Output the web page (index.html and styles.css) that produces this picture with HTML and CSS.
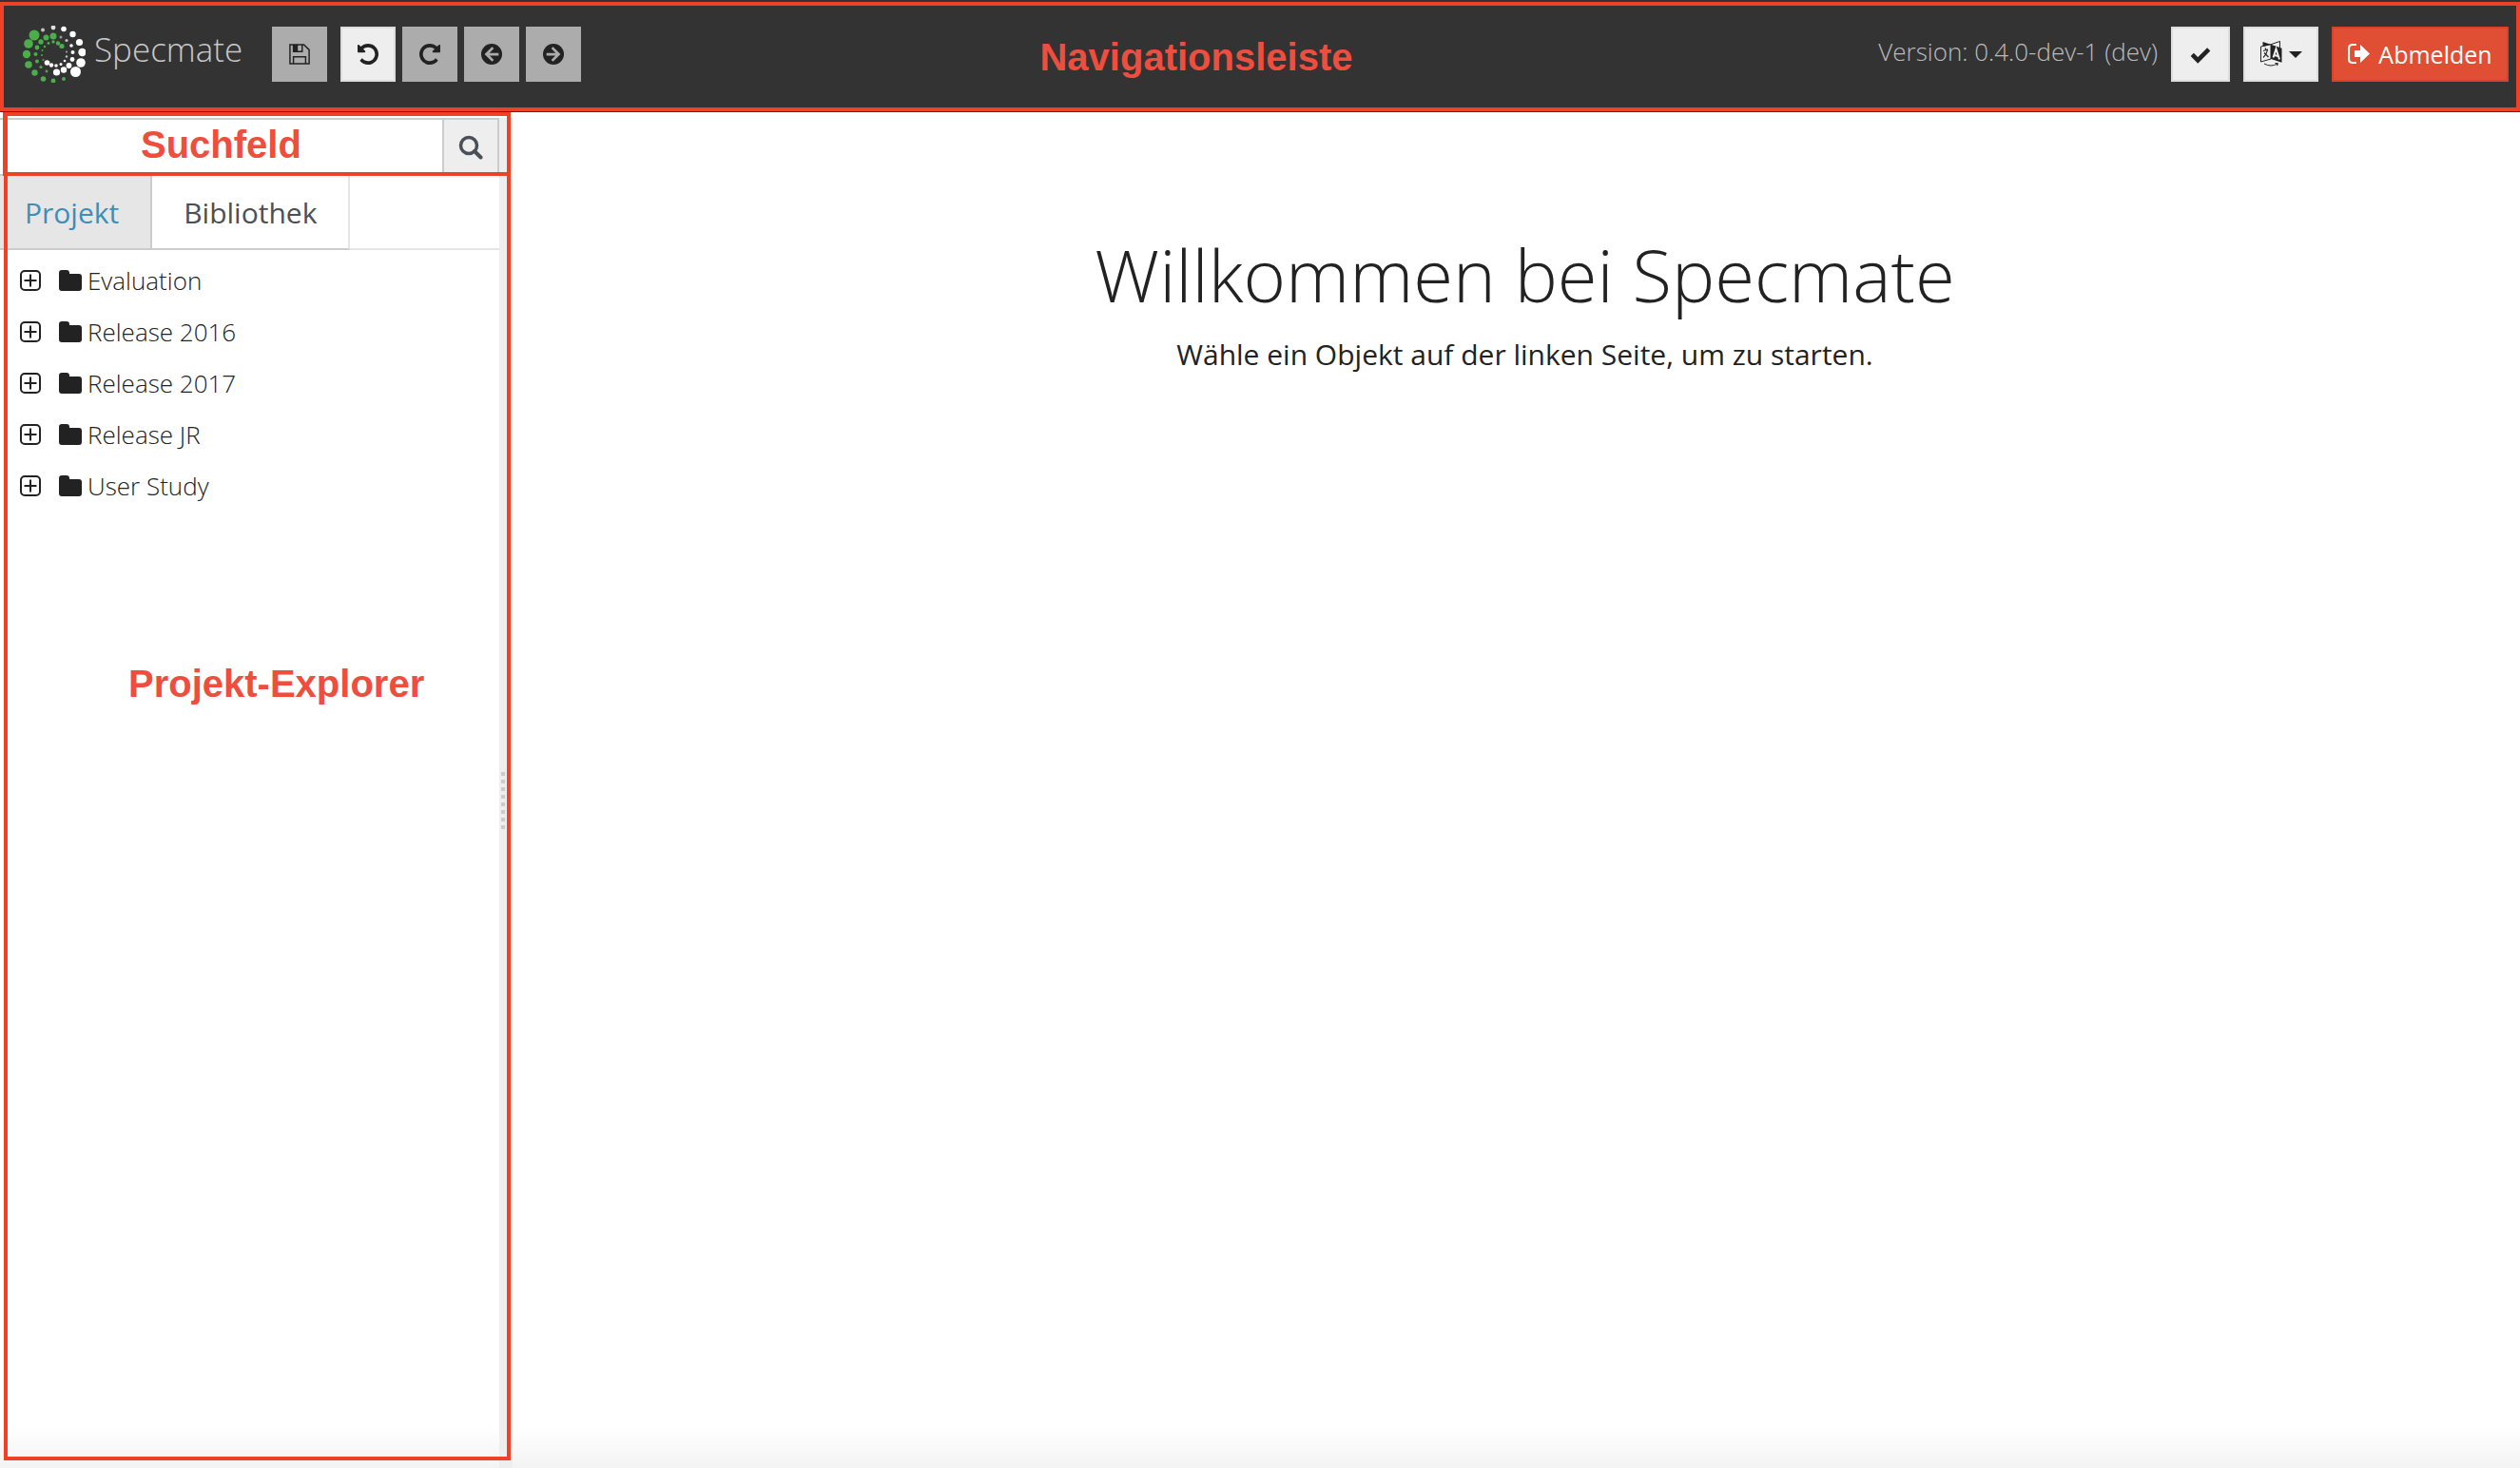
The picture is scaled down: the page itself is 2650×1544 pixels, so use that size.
FILE: index.html
```html
<!DOCTYPE html>
<html lang="de">
<head>
<meta charset="utf-8">
<title>Specmate</title>
<link rel="stylesheet" href="styles.css">
</head>
<body>
<svg class="sprite" aria-hidden="true">
  <symbol id="plus-square" viewBox="0 0 22 22"><rect x="1" y="1" width="20" height="20" rx="4" fill="none" stroke="currentColor" stroke-width="2"/><path d="M11 4.500v13M4.500 11h13" stroke="currentColor" stroke-width="2" fill="none"/></symbol>
  <symbol id="folder" viewBox="0 0 24 22"><path d="M3 0h5q3 0 3 3v1h10q3 0 3 3v12q0 3-3 3H3q-3 0-3-3V3q0-3 3-3z" fill="currentColor"/></symbol>
</svg>
<header class="navbar">
  <a class="brand" href="#">
    <svg class="brand-mark" viewBox="0 0 66 60" aria-hidden="true">
      <g fill="#4cae4a">
        <circle cx="12" cy="10" r="5.500"/><circle cx="6" cy="19" r="4.800"/><circle cx="4" cy="30" r="4.200"/><circle cx="6" cy="41" r="3.800"/><circle cx="12.500" cy="49.500" r="3.200"/><circle cx="21.500" cy="56" r="2.800"/><circle cx="32" cy="58" r="2.400"/><circle cx="43" cy="56" r="2"/>
        <circle cx="32" cy="11" r="3.500"/><circle cx="24.500" cy="12.500" r="3"/><circle cx="19" cy="17" r="2.700"/><circle cx="15" cy="23" r="2.400"/><circle cx="13.500" cy="30" r="2"/><circle cx="15" cy="37.500" r="2"/><circle cx="19" cy="43.500" r="1.600"/><circle cx="25" cy="48" r="1.400"/>
        <circle cx="41" cy="21.500" r="2.600"/><circle cx="37" cy="18.500" r="2.200"/><circle cx="32" cy="17" r="1.700"/><circle cx="27" cy="18.500" r="1.400"/><circle cx="23" cy="22" r="1.200"/><circle cx="20.500" cy="26" r="1"/><circle cx="20" cy="31" r="1"/><circle cx="21.500" cy="36" r="1"/>
      </g>
      <g fill="#fff">
        <circle cx="55.500" cy="48.500" r="5.500"/><circle cx="61" cy="39" r="4.800"/><circle cx="62.500" cy="28" r="4.200"/><circle cx="59.500" cy="17.500" r="3.600"/><circle cx="52.500" cy="9" r="3.200"/><circle cx="43" cy="3.500" r="2.800"/><circle cx="32" cy="2" r="2.400" opacity=".85"/><circle cx="21" cy="4.500" r="2" opacity=".7"/>
        <circle cx="35.500" cy="49" r="3.600"/><circle cx="43" cy="46.500" r="3.200"/><circle cx="48.500" cy="42" r="2.900"/><circle cx="52" cy="35.500" r="2.400"/><circle cx="52.500" cy="28" r="2"/><circle cx="51" cy="21" r="1.800"/><circle cx="46" cy="15.500" r="1.600" opacity=".7"/><circle cx="40" cy="12" r="1.500" opacity=".5"/>
        <circle cx="25.500" cy="39" r="2.800"/><circle cx="30" cy="41.500" r="2.200"/><circle cx="35" cy="42" r="1.800"/><circle cx="40" cy="40.500" r="1.500"/><circle cx="44" cy="37" r="1.300"/><circle cx="46" cy="32.500" r="1.200" opacity=".7"/><circle cx="46" cy="27.500" r="1" opacity=".6"/>
      </g>
    </svg>
    <span class="brand-name">Specmate</span>
  </a>
  <div class="toolbar">
    <button class="tool save" type="button" disabled aria-label="Speichern"><svg viewBox="0 0 24 24"><path d="M1 1h16l6 6v16H1zM5 23v-8h14v8M5 1v8h10V1" fill="none" stroke="currentColor" stroke-width="1.600"/><path d="M5 1h5v8H5z" fill="currentColor"/></svg></button>
    <button class="tool light" type="button" aria-label="Rückgängig"><svg viewBox="0 0 1536 1536"><path fill="currentColor" d="M1536 768q0 156-61 298t-164 245-245 164-298 61q-172 0-327-72.500T177 1259q-7-10-6.500-22.500T179 1216l137-138q10-9 25-9 16 2 23 12 73 95 179 147t225 52q104 0 198.500-40.500T1130 1130t109.500-163.500T1280 768t-40.500-198.500T1130 406 966.500 296.500 768 256q-98 0-188 35.500T420 393l137 138q31 30 14 69-17 40-59 40H64q-26 0-45-19T0 576V128q0-42 40-59 39-17 69 14l130 129Q346 111 483.500 55.500T768 0q156 0 298 61t245 164 164 245 61 298z"/></svg></button>
    <button class="tool" type="button" disabled aria-label="Wiederholen"><svg viewBox="0 0 1536 1536"><path fill="currentColor" transform="matrix(-1 0 0 1 1536 0)" d="M1536 768q0 156-61 298t-164 245-245 164-298 61q-172 0-327-72.500T177 1259q-7-10-6.500-22.500T179 1216l137-138q10-9 25-9 16 2 23 12 73 95 179 147t225 52q104 0 198.500-40.500T1130 1130t109.500-163.500T1280 768t-40.500-198.500T1130 406 966.500 296.500 768 256q-98 0-188 35.500T420 393l137 138q31 30 14 69-17 40-59 40H64q-26 0-45-19T0 576V128q0-42 40-59 39-17 69 14l130 129Q346 111 483.500 55.500T768 0q156 0 298 61t245 164 164 245 61 298z"/></svg></button>
    <button class="tool" type="button" disabled aria-label="Zurück"><svg viewBox="0 0 24 24"><circle cx="12" cy="12" r="12" fill="currentColor"/><path d="M13.500 4.500 6 12l7.500 7.500M6.500 12H20" fill="none" stroke="#acacac" stroke-width="3"/></svg></button>
    <button class="tool" type="button" disabled aria-label="Vor"><svg viewBox="0 0 24 24"><circle cx="12" cy="12" r="12" fill="currentColor"/><path d="M10.500 4.500 18 12l-7.500 7.500M17.500 12H4" fill="none" stroke="#acacac" stroke-width="3"/></svg></button>
  </div>
  <div class="session">
    <span class="version">Version: 0.4.0-dev-1 (dev)</span>
    <button class="tool light check" type="button" aria-label="Status"><svg viewBox="0 0 24 24"><path d="M2.500 12.500 9 19 21.500 6.500" fill="none" stroke="currentColor" stroke-width="5"/></svg></button>
    <button class="tool light language" type="button" aria-label="Sprache"><svg viewBox="0 0 24 28"><path d="M.5 6 11 3.700V19L.5 22zM11 3.700 20.500.5V7" fill="none" stroke="currentColor"/><path d="m2.500 1 8.500 2.700L2.500 6zM11 3.700l11.500 4v15L11 19z" fill="currentColor"/><path d="m3 10.500 5-1.500M5 7.500l1 2M7.500 9.500q-1 5-4.500 8M4 12.500l4.500 4.500" fill="none" stroke="currentColor" stroke-width="1.200"/><path d="m13.500 17.500 3-9 3.500 11M14.500 15l4 1" fill="none" stroke="#eee" stroke-width="2"/><path d="M4 24q7 4 14 0M15.500 23.500l3 .2-1 2.500" fill="none" stroke="currentColor"/></svg><span class="caret"></span></button>
    <button class="tool logout" type="button"><svg viewBox="0 0 24 24"><path d="M9 2H5Q1 2 1 6v11q0 4 4 4h4" fill="none" stroke="currentColor" stroke-width="2.200"/><path d="M7 8h6V2l10 9.500L13 21v-6H7z" fill="currentColor"/></svg>Abmelden</button>
  </div>
  <span class="frame nav-frame"></span>
  <span class="note nav-note">Navigationsleiste</span>
</header>
<div class="workspace">
  <aside class="sidebar">
    <form class="search">
      <input class="search-input" type="search" aria-label="Suchfeld">
      <button class="search-button" type="button" aria-label="Suchen"><svg viewBox="0 0 26 26"><circle cx="11" cy="11" r="8.500" fill="none" stroke="currentColor" stroke-width="3.500"/><path d="m17 17 6.500 6.500" stroke="currentColor" stroke-width="4" stroke-linecap="round"/></svg></button>
      <span class="frame search-frame"></span>
      <span class="note search-note">Suchfeld</span>
    </form>
    <nav class="tabs">
      <a class="tab active" href="#">Projekt</a>
      <a class="tab" href="#">Bibliothek</a>
    </nav>
    <ul class="tree">
      <li><a href="#"><svg class="expand"><use href="#plus-square"/></svg><svg class="folder"><use href="#folder"/></svg>Evaluation</a></li>
      <li><a href="#"><svg class="expand"><use href="#plus-square"/></svg><svg class="folder"><use href="#folder"/></svg>Release 2016</a></li>
      <li><a href="#"><svg class="expand"><use href="#plus-square"/></svg><svg class="folder"><use href="#folder"/></svg>Release 2017</a></li>
      <li><a href="#"><svg class="expand"><use href="#plus-square"/></svg><svg class="folder"><use href="#folder"/></svg>Release JR</a></li>
      <li><a href="#"><svg class="expand"><use href="#plus-square"/></svg><svg class="folder"><use href="#folder"/></svg>User Study</a></li>
    </ul>
    <span class="note explorer-note">Projekt-Explorer</span>
  </aside>
  <div class="gutter"><span class="grip"></span></div>
  <main class="welcome">
    <h1>Willkommen bei Specmate</h1>
    <p>Wähle ein Objekt auf der linken Seite, um zu starten.</p>
  </main>
  <span class="frame explorer-frame"></span>
</div>
</body>
</html>
```
FILE: styles.css
```css
* { box-sizing: border-box; }

body {
  margin: 0;
  min-height: 100vh;
  display: flex;
  flex-direction: column;
  font-family: "Open Sans", "Noto Sans", sans-serif;
  font-size: 26px;
  font-weight: 300;
  color: #222;
  background: linear-gradient(to top, #f3f3f3, #fff 44px);
}

a { color: inherit; text-decoration: none; }
button { font: inherit; cursor: pointer; }
svg { display: block; flex: none; }
.sprite { position: absolute; width: 0; height: 0; }

.navbar {
  position: relative;
  z-index: 1;
  display: flex;
  align-items: flex-start;
  height: 118px;
  padding: 27px 12px 0 24px;
  background: #333;
}

.brand { display: flex; align-items: flex-start; width: 262px; gap: 9px; }
.brand-mark { width: 66px; height: 60px; }
.brand-name { font-size: 35px; line-height: 50px; color: #c8c8c8; }

.toolbar { display: flex; gap: 7px; padding-top: 1px; }
.tool {
  display: flex;
  align-items: center;
  justify-content: center;
  width: 58px;
  height: 58px;
  padding: 0;
  border: 0;
  color: #222;
  background: #acacac;
}
.tool svg { width: 22px; height: 22px; }
.tool.save { margin-right: 7px; }
.tool.light { border: 2px solid #ddd; background: #eee; }

.session { display: flex; gap: 14px; margin-left: auto; padding-top: 1px; }
.version { line-height: 52px; color: #bbb; }
.tool.check { width: 62px; }
.tool.language { width: 79px; gap: 6px; }
.tool.language svg { width: 24px; height: 28px; }
.caret { border: 7px solid transparent; border-top-color: #222; border-bottom: 0; }
.tool.logout {
  width: 186px;
  gap: 8px;
  border: 2px solid #d9412a;
  font-size: 25px;
  font-weight: 400;
  color: #fff;
  background: #e04f33;
}
.tool.logout svg { width: 24px; height: 24px; }

.workspace { position: relative; flex: 1; display: flex; padding-top: 6px; }
.sidebar { position: relative; width: 525px; }

.search { position: relative; display: flex; height: 61px; }
.search-input {
  flex: 1;
  min-width: 0;
  padding: 0 16px;
  border: 2px solid #ccc;
  border-width: 2px 0;
  font: inherit;
  background: #fff;
}
.search-button {
  display: flex;
  align-items: center;
  justify-content: center;
  width: 60px;
  padding: 0;
  border: 2px solid #ccc;
  color: #495057;
  background: #eee;
}
.search-button svg { width: 26px; height: 26px; }

.tabs { display: flex; border-bottom: 2px solid #e5e5e5; font-size: 30px; font-weight: 400; }
.tab {
  height: 78px;
  margin-bottom: -2px;
  padding: 0 33px;
  border-right: 2px solid #e5e5e5;
  border-bottom: 2px solid #ccc;
  line-height: 78px;
  color: #495057;
}
.tab.active { padding-left: 26px; border-right-color: #ccc; color: #3b8fba; background: #e6e6e6; }

.tree { margin: 0; padding: 5px 0 0 21px; list-style: none; }
.tree a { display: flex; align-items: center; height: 54px; }
.expand { width: 22px; height: 22px; margin-right: 19px; }
.folder { width: 24px; height: 22px; margin-right: 6px; }

.gutter { display: flex; align-items: center; width: 14px; padding: 16px 0 0 2px; background: #eee; }
.grip { width: 4px; height: 60px; background: repeating-linear-gradient(#ccc 0 4px, transparent 4px 8px); }

.welcome { flex: 1; padding: 108px 0 0 18px; text-align: center; }
.welcome h1 { margin: 0; font-size: 76px; font-weight: 300; line-height: 114px; }
.welcome p { margin: 0; font-size: 30px; font-weight: 400; line-height: 54px; }

.frame { position: absolute; border: 4px solid #ee4126; pointer-events: none; }
.note {
  position: absolute;
  font-family: "Liberation Sans", Arial, sans-serif;
  font-size: 40px;
  font-weight: 700;
  line-height: 46px;
  color: #ee4e3e;
  white-space: nowrap;
}
.nav-frame { inset: 2px 0 1px; }
.nav-note { left: 0; right: 134px; top: 37px; text-align: center; }
.search-frame { inset: -7px -12px 0 3px; }
.search-note { left: 148px; top: 5px; }
.explorer-frame { left: 4px; top: 0; bottom: 8px; width: 533px; }
.explorer-note { left: 135px; top: 572px; }
```
